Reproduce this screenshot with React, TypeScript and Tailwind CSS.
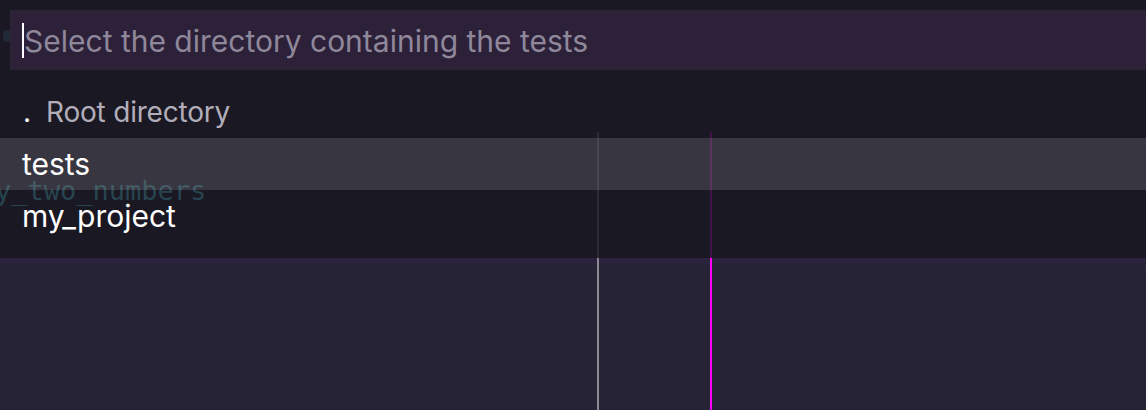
import React from "react";

const ROWS = [
  { label: "tests", active: true },
  { label: "my_project", active: false },
];

export default function App() {
  return (
    <div
      className="relative h-[410px] w-[1146px] overflow-hidden bg-[#262336]"
      style={{ fontFamily: "Inter, 'Noto Sans', sans-serif" }}
    >
      {/* editor behind the picker */}
      <div className="absolute left-0 right-0 top-[258px] h-[10px] bg-gradient-to-b from-[#2d2341] to-[#262336]" />
      <div className="absolute left-[597px] top-[132px] h-[278px] w-[2px] bg-[#8a8890]" />
      <div className="absolute left-[710px] top-[132px] h-[278px] w-[2px] bg-[#ff00ff]" />

      {/* quick pick panel */}
      <div className="relative h-[258px] w-full bg-[#181620]/[0.82]">
        <div className="absolute left-[3px] top-[30px] h-[12px] w-[8px] rounded-full bg-[#1f2a36]" />
        <div
          className="absolute left-[-5px] top-[175px] text-[27px] leading-[32px] text-[#27444f]"
          style={{ fontFamily: "'DejaVu Sans Mono', monospace" }}
        >
          y_two_numbers
        </div>

        <div className="relative px-[10px] pt-[10px]">
          <div className="-mr-[40px] flex h-[60px] items-center border border-[#2a2733] bg-[#2c2139] pl-[11px]">
            <span className="h-[35px] w-[2px] bg-white" />
            <span className="pt-[2px] text-[30px] text-[#8f889b]">
              Select the directory containing the tests
            </span>
          </div>
        </div>

        <div className="relative mt-[16px] flex flex-col">
          <div className="flex h-[52px] items-center pl-[22px] text-[28px] text-[#b2aeb9]">
            <span className="w-[24px] pl-[1px] text-white">.</span>
            <span className="tracking-[-0.2px]">Root directory</span>
          </div>
          {ROWS.map((r) => (
            <div
              key={r.label}
              className={
                "flex h-[52px] items-center pl-[22px] text-[30px] text-white " +
                (r.active ? "bg-white/[0.13]" : "")
              }
            >
              {r.label}
            </div>
          ))}
        </div>
      </div>
    </div>
  );
}
